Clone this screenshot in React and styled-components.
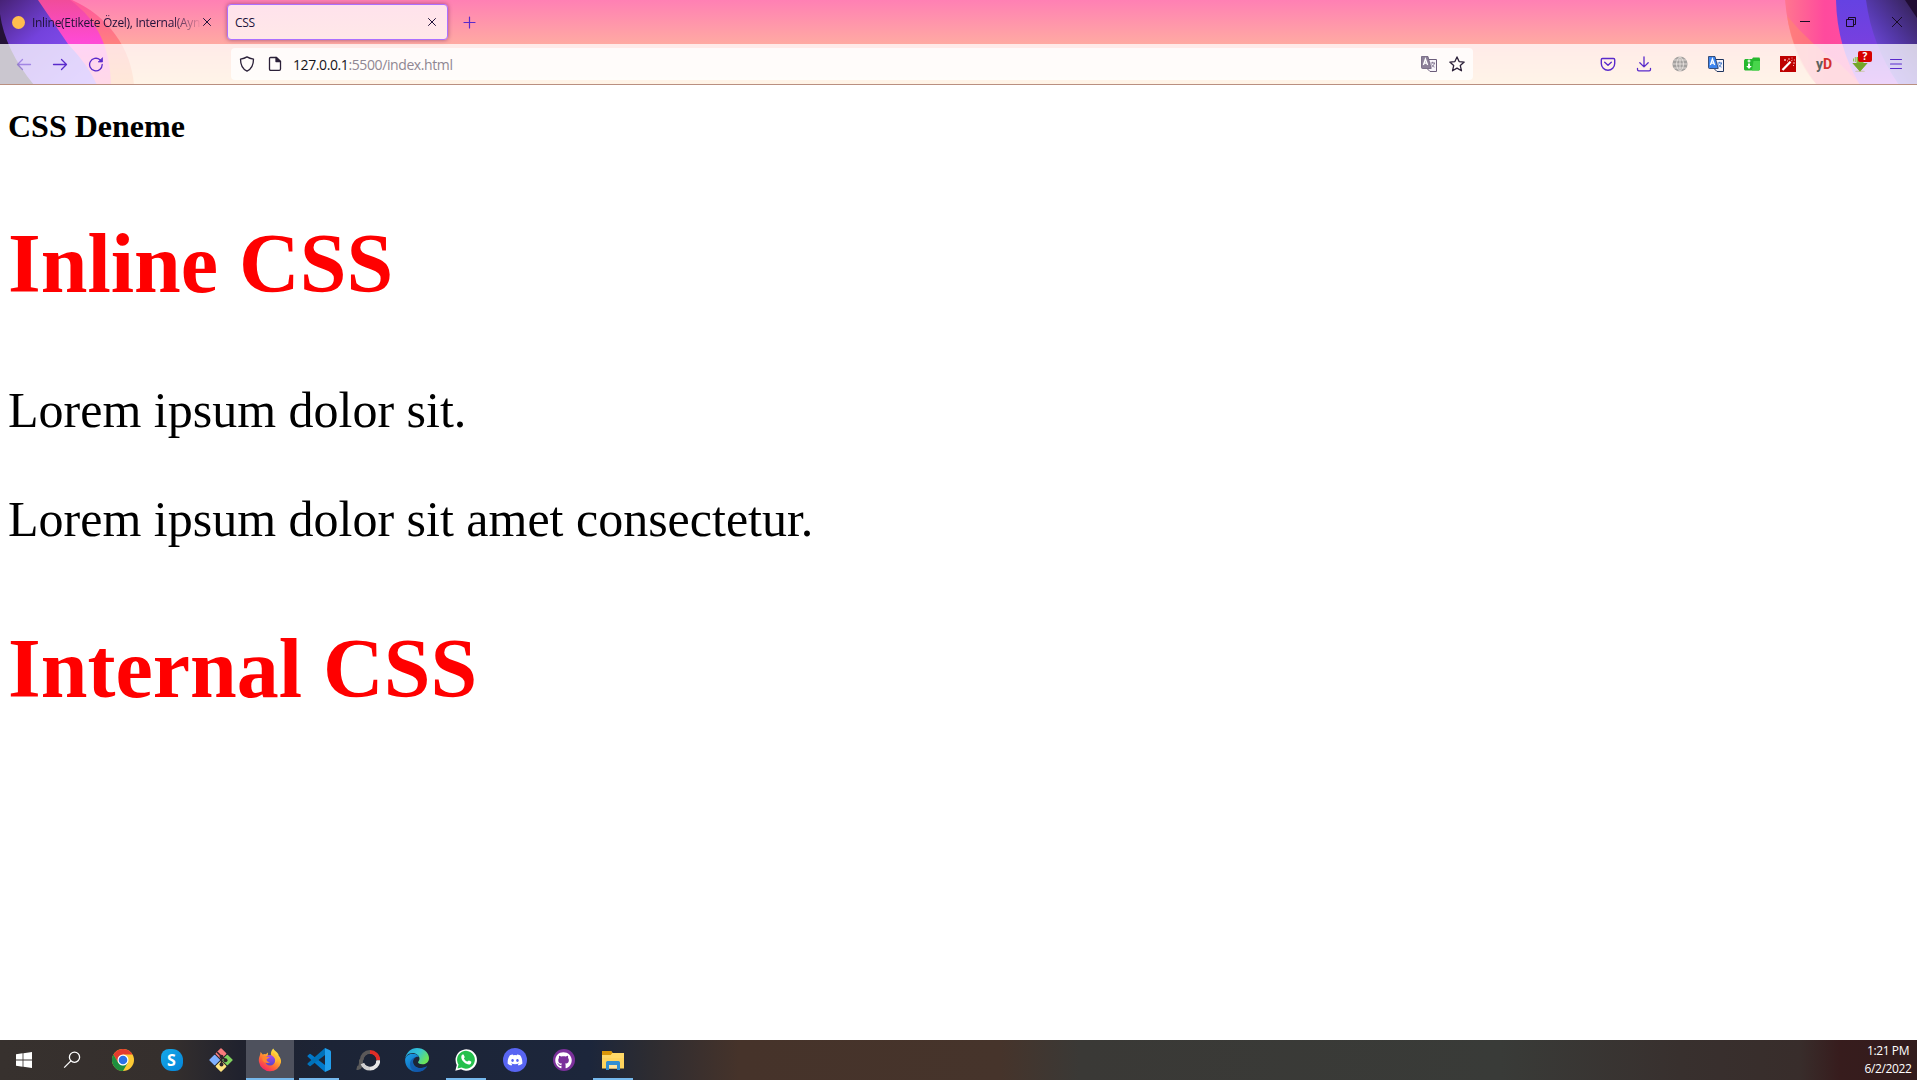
import React from "react";
import styled, { createGlobalStyle } from "styled-components";
import { FaGithub, FaDiscord } from "react-icons/fa";

const GlobalStyle = createGlobalStyle`
  html, body { margin: 0; padding: 0; background: #fff; overflow: hidden; }
  * { box-sizing: border-box; }
  svg { display: block; flex: none; }
`;

const Screen = styled.div`
  display: flex;
  flex-direction: column;
  width: 1917px;
  height: 1080px;
  overflow: hidden;
  font-family: "Open Sans", "Noto Sans", sans-serif;
`;

const Chrome = styled.header`
  position: relative;
  isolation: isolate;
  height: 85px;
  flex: none;
  overflow: hidden;
`;

const ThemeArt = styled.svg`
  position: absolute;
  inset: 0;
  z-index: -1;
`;

const TabStrip = styled.div`
  display: flex;
  align-items: flex-start;
  height: 44px;
  padding-top: 4px;
`;

const Tab = styled.div`
  display: flex;
  align-items: center;
  width: ${(p) => p.$width}px;
  height: 36px;
  padding: 0 10px 0 ${(p) => p.$indent}px;
  margin-left: ${(p) => p.$gap || 0}px;
  border-radius: 4px;
  font-size: 12px;
  color: #20123a;
  ${(p) =>
    p.$active &&
    `background: linear-gradient(#ffe2ec, #ffe8e8);
     border: 1px solid #ac70ff;
     box-shadow: 0 0 4px rgba(90, 20, 80, 0.55);`}
`;

const TabDot = styled.span`
  width: 13px;
  height: 13px;
  margin-right: 7px;
  border-radius: 50%;
  background: #ffbd4f;
  flex: none;
`;

const TabTitle = styled.span`
  flex: 1;
  min-width: 0;
  overflow: hidden;
  white-space: nowrap;
  line-height: 18px;
  padding-top: 2px;
  letter-spacing: ${(p) => p.$tracking || 0}px;
  ${(p) => p.$fade && `mask-image: linear-gradient(to right, #000 82%, transparent 100%);`}
`;

const NewTab = styled.div`
  display: flex;
  align-items: center;
  justify-content: center;
  width: 36px;
  height: 37px;
  margin-left: 3px;
`;

const WindowControls = styled.div`
  display: flex;
  margin-left: auto;
  margin-right: -3px;
`;

const WindowButton = styled.div`
  display: flex;
  align-items: center;
  justify-content: center;
  width: 46px;
  height: 36px;
`;

const Toolbar = styled.div`
  display: flex;
  align-items: center;
  height: 41px;
  padding: 0 3px 0 6px;
  background: rgba(255, 255, 255, 0.76);
  border-bottom: 1px solid #b98f80;
`;

const ToolButton = styled.div`
  display: flex;
  align-items: center;
  justify-content: center;
  width: 36px;
  height: 32px;
  opacity: ${(p) => (p.$disabled ? 0.45 : 1)};
`;

const AddressBar = styled.div`
  display: flex;
  align-items: center;
  width: 1242px;
  height: 32px;
  margin: 0 117px;
  padding: 0 8px;
  border-radius: 4px;
  background: rgba(255, 255, 255, 0.78);
`;

const AddressIcon = styled.div`
  width: 16px;
  height: 16px;
  margin-right: ${(p) => p.$after}px;
`;

const Address = styled.span`
  flex: 1;
  padding-top: 2px;
  font-size: 14px;
  line-height: 20px;
  letter-spacing: -0.4px;
  color: #15141a;
`;

const AddressRest = styled.span`
  color: #8f8793;
`;

const ExtensionName = styled.span`
  font: bold 14px "Roboto", sans-serif;
  color: #5c625e;
`;

const ExtensionAccent = styled.span`
  color: #d32f2f;
`;

const BadgedIcon = styled.div`
  position: relative;
  width: 16px;
  height: 16px;
`;

const Badge = styled.span`
  position: absolute;
  left: 6px;
  top: -5px;
  width: 14px;
  height: 11px;
  border-radius: 2px;
  background: #d70000;
  color: #fff;
  font: bold 10px/11px "Open Sans", sans-serif;
  text-align: center;
`;

const Page = styled.main`
  flex: 1;
  padding: 23px 8px 0;
  background: #fff;
  color: #000;
  font-family: "Liberation Serif", "Times New Roman", serif;
`;

const PageTitle = styled.h1`
  margin: 0;
  font-size: 32px;
  line-height: 36px;
`;

const SectionTitle = styled.h2`
  margin: ${(p) => p.$space}px 0 0;
  font-size: 84px;
  line-height: 96px;
  color: red;
`;

const Paragraph = styled.p`
  margin: ${(p) => p.$space}px 0 0;
  font-size: 50px;
  line-height: 58px;
`;

const Taskbar = styled.footer`
  display: flex;
  flex: none;
  height: 40px;
  background: linear-gradient(
    to right,
    #37312e 0,
    #352f2d 170px,
    #20222e 240px,
    #1c2436 330px,
    #1c263b 590px,
    #2d2c31 650px,
    #46332a 740px,
    #46342b 1000px,
    #3a3936 1080px,
    #393b38 1500px,
    #38302e 1680px,
    #382d2b 1800px,
    #371c1d 1840px,
    #321c1c 1917px
  );
`;

const TaskCell = styled.div`
  position: relative;
  display: flex;
  align-items: center;
  justify-content: center;
  width: ${(p) => p.$width || 49}px;
  height: 40px;
  margin-right: ${(p) => p.$after || 0}px;
  background: ${(p) => (p.$active ? "linear-gradient(to right, transparent 1px, #4e515d 1px)" : "none")};
`;

const RunningMark = styled.span`
  position: absolute;
  bottom: 0;
  left: ${(p) => (p.$wide ? 1 : 5)}px;
  right: ${(p) => (p.$wide ? 0 : 4)}px;
  height: 2px;
  background: #76b9ed;
`;

const Disc = styled.span`
  display: flex;
  align-items: center;
  justify-content: center;
  width: ${(p) => p.$size}px;
  height: ${(p) => p.$size}px;
  border-radius: 50%;
  background: ${(p) => p.$fill};
  color: #fff;
`;

const Clock = styled.div`
  width: 58px;
  margin-left: auto;
  padding-top: 2px;
  color: #fff;
  font-size: 12px;
  line-height: 18px;
  text-align: center;
  letter-spacing: -0.4px;
`;

const Stroke = ({ size = 16, color = "#592acb", width = 1.3, children }) => (
  <svg width={size} height={size} viewBox={`0 0 ${size} ${size}`} fill="none" stroke={color} strokeWidth={width} strokeLinecap="round" strokeLinejoin="round">
    {children}
  </svg>
);

const CloseIcon = () => (
  <Stroke size={10} color="#20123a" width={1}><path d="M1.5 1.5l7 7M8.500 1.500l-7 7" /></Stroke>
);

const Background = () => (
  <ThemeArt width="1917" height="85" viewBox="0 0 1917 85">
    <defs>
      <linearGradient id="sky" x1="0" y1="0" x2="0" y2="1">
        <stop offset="0" stopColor="#ff80b4" /><stop offset=".52" stopColor="#ffaaa2" /><stop offset="1" stopColor="#ffd29c" />
      </linearGradient>
      <linearGradient id="violet" x1="0" y1="0" x2="1" y2="1">
        <stop offset="0" stopColor="#472276" /><stop offset=".4" stopColor="#7442dc" /><stop offset="1" stopColor="#9059ff" />
      </linearGradient>
      <linearGradient id="magenta" x1="0" y1="0" x2="0" y2="1">
        <stop offset="0" stopColor="#f14c9a" /><stop offset=".5" stopColor="#ff4ad6" /><stop offset="1" stopColor="#ff62a0" />
      </linearGradient>
      <linearGradient id="coral" x1="0" y1="0" x2="0" y2="1">
        <stop offset="0" stopColor="#ff559e" /><stop offset=".5" stopColor="#ff7f80" /><stop offset="1" stopColor="#ffa15e" />
      </linearGradient>
      <linearGradient id="coralR" x1="0" y1="0" x2="1" y2="0">
        <stop offset="0" stopColor="#ff768f" /><stop offset=".3" stopColor="#ff4a9d" /><stop offset="1" stopColor="#ff4daa" />
      </linearGradient>
      <linearGradient id="violetR" x1="0" y1="0" x2="0" y2="1">
        <stop offset="0" stopColor="#6542e2" /><stop offset=".5" stopColor="#7740df" /><stop offset="1" stopColor="#b64cec" />
      </linearGradient>
      <linearGradient id="duskR" x1="1" y1="0" x2=".2" y2="1">
        <stop offset="0" stopColor="#32204f" /><stop offset=".5" stopColor="#5539ab" /><stop offset="1" stopColor="#8254ff" />
      </linearGradient>
    </defs>
    <rect width="1917" height="85" fill="url(#sky)" />
    <path d="M0 0H72C108 16 131 48 134 85H0Z" fill="url(#coral)" />
    <path d="M0 0H70C98 20 110 48 111 85H0Z" fill="url(#magenta)" />
    <path d="M0 0H38L68 44Q89 66 97 85H0Z" fill="url(#violet)" />
    <path d="M0 14Q5 50 34 85H0Z" fill="#241236" />
    <path d="M1785 0Q1789 50 1817 85H1917V0Z" fill="url(#coralR)" />
    <path d="M1787 16Q1794 61 1817 85H1861L1840 64Q1812 46 1787 16Z" fill="#ff876e" opacity=".55" />
    <path d="M1836 0Q1837 47 1860 85H1917V0Z" fill="url(#violetR)" />
    <path d="M1866 0Q1872 46 1899 85H1917V0Z" fill="url(#duskR)" />
    <path d="M1905 0L1917 18V0Z" fill="#200d33" />
  </ThemeArt>
);

const TranslateIcon = ({ back, front, ink }) => (
  <svg width="16" height="16" viewBox="0 0 16 16">
    <path d="M7.500 3.500h8v12H9L6.500 13" fill="#f7f4fa" stroke={ink} />
    <path d="M9.500 7h4.500M11.700 5.800V7M13.500 7c-.5 2-1.600 3.300-3 4M10.500 8.500c.6 1.200 1.500 2 3 2.600" fill="none" stroke={front} strokeWidth="1" />
    <path d="M.5.5H7l3.200 12H1.500q-1 0-1-1Z" fill={back} stroke={ink} strokeWidth=".8" />
    <path d="M2.400 9l2-6 2.200 6M3 7.200h3" fill="none" stroke="#fff" strokeWidth="1.300" />
  </svg>
);

const GlobeIcon = () => (
  <svg width="16" height="16" viewBox="0 0 16 16" fill="none">
    <circle cx="8" cy="8" r="7.600" fill="#a4a19f" />
    <path d="M8 .5v15M.5 8h15M2 4h12M2 12h12M8 .5C3.400 4.500 3.400 11.500 8 15.500 12.600 11.500 12.600 4.500 8 .5" stroke="#efe9e5" strokeWidth=".8" />
  </svg>
);

const GreenFolder = () => (
  <svg width="16" height="14" viewBox="0 0 16 14">
    <path d="M0 3.500 1 2h7l1-1.500h6.500L16 2v10.500l-1 1H1l-1-1Z" fill="#26b82f" />
    <path d="M9.500 4H16v8.500l-1 1H8Z" fill="#48d64b" />
    <path d="M5 2.500v3M3.500 4h3" stroke="#fff" strokeWidth="1.200" fill="none" />
    <path d="M4 6.500h2V9h1.800L5 12 2.200 9H4Z" fill="#fff" />
  </svg>
);

const WandIcon = () => (
  <svg width="16" height="16" viewBox="0 0 16 16">
    <rect width="16" height="16" fill="#be0000" />
    <path d="M2.500 14 10.500 5.800" stroke="#fff" strokeWidth="2.300" />
    <path d="M11 5.300l1.500-1.500M9 2v2M13 7h2M5 3v2M4 4h2M12 1.500v1M14 4h1M13 9.500h1M7.500 4.500v1" stroke="#ffdede" strokeWidth=".8" />
  </svg>
);

const DownloadHelper = () => (
  <svg width="16" height="16" viewBox="0 0 16 16">
    <ellipse cx="8" cy="15.300" rx="5" ry=".8" fill="#d2c7bb" />
    <path d="M4.500 1h7v6h4L8 15.500.5 7h4Z" fill="#86bd35" />
    <path d="M.5 7h15L8 15.500Z" fill="#74a52c" />
    <path d="M1.500 2.500v3M3.300 1v5" stroke="#8fc24b" />
  </svg>
);

const WindowsLogo = () => (
  <svg width="16" height="16" viewBox="0 0 16 16" fill="#fff">
    <path d="M0 2.200 6.600 1.300v6.300H0ZM7.400 1.200 16 0v7.600H7.400ZM0 8.400h6.600v6.300L0 13.800ZM7.400 8.400H16V16l-8.600-1.200Z" />
  </svg>
);

const SearchIcon = () => (
  <svg width="18" height="18" viewBox="0 0 18 18" fill="none" stroke="#fff" strokeWidth="1.300">
    <circle cx="11.500" cy="6.200" r="5.100" /><path d="M7.900 9.900 1.200 16.600" />
  </svg>
);

const ChromeLogo = () => (
  <svg width="22" height="22" viewBox="0 0 22 22">
    <circle cx="11" cy="11" r="11" fill="#fcc934" />
    <path d="M1.470 5.500A11 11 0 0 1 20.530 5.500H11L6.200 13.700Z" fill="#e33b2e" />
    <path d="M1.470 5.500A11 11 0 0 0 11 22l4.760-8.250L11 16.500 6.240 13.750Z" fill="#1e8e3e" />
    <circle cx="11" cy="11" r="5.500" fill="#fff" /><circle cx="11" cy="11" r="4.300" fill="#2b72e6" />
  </svg>
);

const SkypeMark = styled.span`
  display: flex;
  align-items: center;
  justify-content: center;
  width: 22px;
  height: 22px;
  border-radius: 8px 11px 8px 11px;
  background: linear-gradient(135deg, #16a9e8, #0484d8);
  color: #fff;
  font: bold 16px/22px "Open Sans", sans-serif;
`;

const GitLogo = () => (
  <svg width="24" height="24" viewBox="0 0 24 24">
    <g transform="rotate(45 12 12)">
      <rect x="3.500" y="3.500" width="8" height="8" rx=".8" fill="#fa7c7c" />
      <rect x="12.500" y="3.500" width="8" height="8" rx=".8" fill="#80d35e" />
      <rect x="3.500" y="12.500" width="8" height="8" rx=".8" fill="#7fb0ff" />
      <rect x="12.500" y="12.500" width="8" height="8" rx=".8" fill="#ffe580" />
    </g>
    <path d="M8 4l4.500 4.500V17M12.500 8.500l4 3.500" fill="none" stroke="#30252b" strokeWidth="1.600" />
    <circle cx="12.500" cy="8.800" r="2" fill="#30252b" /><circle cx="16.500" cy="12.200" r="2" fill="#30252b" /><circle cx="12.500" cy="16.500" r="2" fill="#30252b" />
  </svg>
);

const FirefoxLogo = () => (
  <svg width="24" height="24" viewBox="0 0 24 24">
    <defs>
      <linearGradient id="flame" x1=".85" y1="0" x2=".2" y2="1">
        <stop offset="0" stopColor="#fff44f" /><stop offset=".35" stopColor="#ffb72e" /><stop offset=".65" stopColor="#ff6a36" /><stop offset="1" stopColor="#f4196f" />
      </linearGradient>
      <linearGradient id="orb" x1="0" y1="0" x2="0" y2="1"><stop offset="0" stopColor="#a84be8" /><stop offset="1" stopColor="#5945c8" /></linearGradient>
    </defs>
    <path d="M15.200.5c1 2.300 3.800 3.300 5 5.400.2.300.4 1.500.4 1.500C22.500 9.500 23.400 12 23 14.500A11.200 11.200 0 0 1 1 14C.3 9.500 2.300 7.800 2.600 4l2.100 2.500Q6.500 5.700 8 6.300 9 5 10 4.600l-.2 3 3.500.3Q12 3.700 15.200.5Z" fill="url(#flame)" />
    <circle cx="12" cy="12.300" r="5.200" fill="url(#orb)" />
    <path d="M4.500 8.600c3-1.200 4 .5 7 .4.300 1-2.900 1.600-3 3 .8 1.700 2.300 2.100 3.600 2.200-2.800 1.800-6.800.3-7.600-2Z" fill="#ff852f" />
    <path d="M14 7.500c3 1.500 4 4.500 3 7.500 2-1.300 2.500-4 1.500-6L15.500 5Z" fill="#ffba35" />
  </svg>
);

const CodeLogo = () => (
  <svg width="24" height="24" viewBox="0 0 24 24">
    <path d="M.7 7.600 2.500 6Q3 5.700 3.600 6.100L18 17v7L.7 8.800Q.3 8.200.7 7.600Z" fill="#0179cb" />
    <path d="M.7 16.400 2.500 18q.5.300 1.100-.1L18 7V0L.7 15.200q-.4.600 0 1.200Z" fill="#0072ba" />
    <path d="M18 0v24l5-2.300q1-.5 1-1.500V3.800q0-1-1-1.500Z" fill="#229eeb" />
  </svg>
);

const RingLogo = () => (
  <svg width="24" height="24" viewBox="0 0 24 24" fill="none">
    <path d="M5 11.500Q5.500 21 .8 19.700" stroke="#5b5b5b" strokeWidth="4" />
    <path d="M14 4a8.300 8.300 0 0 0-8.300 8.300" stroke="#5a5858" strokeWidth="4" />
    <path d="M14 4a8.300 8.300 0 0 1 8.300 8.300" stroke="#e12d27" strokeWidth="4" />
    <path d="M22.300 12.300a8.300 8.300 0 0 1-8.300 8.300" stroke="#e6e6e6" strokeWidth="4" />
    <path d="M6.500 15.500A8.300 8.300 0 0 0 14 20.600" stroke="#d0d0d0" strokeWidth="4" />
    <circle cx="14" cy="12.300" r="6.200" fill="#1c2436" />
  </svg>
);

const EdgeLogo = () => (
  <svg width="24" height="24" viewBox="0 0 24 24">
    <defs>
      <linearGradient id="wave" x1="0" y1="0" x2="1" y2=".5"><stop offset="0" stopColor="#23a5df" /><stop offset=".55" stopColor="#35c5d5" /><stop offset="1" stopColor="#6be35a" /></linearGradient>
      <linearGradient id="deep" x1="0" y1="0" x2="1" y2="1"><stop offset="0" stopColor="#1aa1e8" /><stop offset="1" stopColor="#0c4da4" /></linearGradient>
    </defs>
    <path d="M.2 10.800C1 4.700 6 0 12 0c6.800 0 12 4.600 12 10 0 4-3 6.300-6.500 6.300-3.400 0-4.500-1.300-4.500-2 0-.8 1.500-1.300 1.500-3.500C14.500 7.500 11 5 7.600 5 3.500 5 .7 8 .2 10.800Z" fill="url(#wave)" />
    <path d="M.2 10.800C1.300 7.500 4.500 5.800 8 5.800c3 0 5.500 1.400 6 3.200-2-1-6 .4-6 4.500 0 4.400 4 7 8.300 6.500 2.500-.2 4.400-1 5.700-1.700C20.300 21.700 16.500 24 12 24 5 24-.6 18.300.2 10.800Z" fill="url(#deep)" />
    <path d="M10.800 9.300C9 10.500 8 12 8 14.200c0 4.100 4 6.400 8.300 5.800 2.500-.2 4.400-1 5.700-1.700-1.800 3.500-5.500 5.700-10 5.700-5-.9-7-4.500-7-8 0-3.400 2.500-6.200 5.800-6.700Z" fill="#1355a8" opacity=".75" />
  </svg>
);

const ExplorerLogo = () => (
  <svg width="22" height="19" viewBox="0 0 22 19">
    <path d="M0 2Q0 0 1.500 0H9l1.500 2H22v15.500H0Z" fill="#ffd45d" />
    <path d="M0 0h9l1.500 1.500L9 4H0Z" fill="#db9708" />
    <path d="M0 4h9l1.500-2H22v5H0Z" fill="#ffd968" />
    <path d="M4 19v-7.500Q4 10 5.500 10h11q1.500 0 1.500 1.500V19h-3v-5H7v5Z" fill="#318ed2" />
    <path d="M7 14h8v3.500H7Z" fill="#ffe29a" />
  </svg>
);

const WhatsAppLogo = () => (
  <svg width="22" height="22" viewBox="0 0 22 22">
    <path d="M.3 21.700 1.800 16A10.700 10.700 0 1 1 6 20.300Z" fill="#fff" />
    <path d="M2.500 19.600l1-4A8.900 8.900 0 1 1 6.600 18.500Z" fill="#25c04c" />
    <path d="M7.200 5.800c.5-.5 1.300-.5 1.600.1l.9 2c.2.500-.8 1.300-.8 1.500.8 1.500 2 2.600 3.600 3.200.3 0 1-1.200 1.500-1l2.100 1c.6.400.1 1.800-.5 2.300-2.800 2-8.800-2.300-9.300-6.200-.1-1 .2-2.200.9-2.900Z" fill="#fff" />
  </svg>
);

export default function App() {
  return (
    <Screen>
      <GlobalStyle />
      <Chrome>
        <Background />
        <TabStrip>
          <Tab $width={222} $indent={12}>
            <TabDot />
            <TabTitle $fade $tracking={-0.3}>Inline(Etikete Özel), Internal(Aynı</TabTitle>
            <CloseIcon />
          </Tab>
          <Tab $active $width={221} $indent={7} $gap={5}>
            <TabTitle $tracking={-0.3}>CSS</TabTitle>
            <CloseIcon />
          </Tab>
          <NewTab>
            <Stroke size={13} width={1.2}><path d="M6.500 1v11M1 6.500h11" /></Stroke>
          </NewTab>
          <WindowControls>
            <WindowButton><svg width="10" height="10"><path d="M0 4.500h10" stroke="#180b25" /></svg></WindowButton>
            <WindowButton><svg width="10" height="10" fill="none" stroke="#180b25"><path d="M.5 2.500h7v7h-7ZM2.500 2.500v-2h7v7h-2" /></svg></WindowButton>
            <WindowButton><svg width="10" height="10" stroke="#180b25"><path d="M0 0l10 10M10 0L0 10" /></svg></WindowButton>
          </WindowControls>
        </TabStrip>
        <Toolbar>
          <ToolButton $disabled><Stroke><path d="M14.500 8.500h-13M6.500 3.500l-5 5 5 5" /></Stroke></ToolButton>
          <ToolButton><Stroke><path d="M1.500 8.500h13M9.500 3.500l5 5-5 5" /></Stroke></ToolButton>
          <ToolButton><Stroke><path d="M14.200 8.500A6.300 6.300 0 1 1 12 3.800l1.500 1.200" /><path d="M14.500 2v4h-4Z" fill="#592acb" strokeWidth=".7" /></Stroke></ToolButton>
          <AddressBar>
            <AddressIcon $after={12}><Stroke color="#2b2038" width={1.3}><path d="M8 .9c2.200 1.400 4.300 1.900 6.500 2.200C14.500 8.500 13 13 8 15.200 3 13 1.500 8.500 1.500 3.100 3.700 2.800 5.800 2.300 8 .9Z" /></Stroke></AddressIcon>
            <AddressIcon $after={10}><Stroke color="#2b2038" width={1.3}><path d="M3.500 1.500h6l4 4V13q0 1.300-1.300 1.300H3.700Q2.500 14.300 2.500 13V2.500q0-1 1-1Z" /><path d="M9 1.500V5.500h4.500Z" fill="#2b2038" /></Stroke></AddressIcon>
            <Address>127.0.0.1<AddressRest>:5500/index.html</AddressRest></Address>
            <AddressIcon $after={12}><TranslateIcon back="#8d8199" front="#81748f" ink="#6b5d7a" /></AddressIcon>
            <AddressIcon $after={0}><Stroke color="#2b2038" width={1.3}><path d="M8 .9l2.100 4.700 5.100.5-3.900 3.500 1.200 5.200L8 12.100l-4.500 2.700 1.200-5.200L.8 6.100l5.100-.5Z" /></Stroke></AddressIcon>
          </AddressBar>
          <ToolButton><Stroke width={1.4}><path d="M2.500 2.500h11q1.200 0 1.200 1.200V7.500a6.700 6.700 0 0 1-13.400 0V3.700q0-1.200 1.200-1.200ZM4.700 6.300 8 9.300l3.300-3" /></Stroke></ToolButton>
          <ToolButton><Stroke><path d="M8 .8v10M3.800 6.800 8 10.900l4.200-4.100M1.500 12.500v1q0 1.300 1.300 1.300h10.400q1.300 0 1.300-1.300v-1" /></Stroke></ToolButton>
          <ToolButton><GlobeIcon /></ToolButton>
          <ToolButton><TranslateIcon back="#3c84ee" front="#3c74c8" ink="#1e345e" /></ToolButton>
          <ToolButton><GreenFolder /></ToolButton>
          <ToolButton><WandIcon /></ToolButton>
          <ToolButton><ExtensionName>y<ExtensionAccent>D</ExtensionAccent></ExtensionName></ToolButton>
          <ToolButton><BadgedIcon><DownloadHelper /><Badge>?</Badge></BadgedIcon></ToolButton>
          <ToolButton><Stroke width={1.1}><path d="M2.500 3.500h11M2.500 8h11M2.500 12.500h11" /></Stroke></ToolButton>
        </Toolbar>
      </Chrome>

      <Page>
        <PageTitle>CSS Deneme</PageTitle>
        <SectionTitle $space={72}>Inline CSS</SectionTitle>
        <Paragraph $space={69}>Lorem ipsum dolor sit.</Paragraph>
        <Paragraph $space={51}>Lorem ipsum dolor sit amet consectetur.</Paragraph>
        <SectionTitle $space={73}>Internal CSS</SectionTitle>
      </Page>

      <Taskbar>
        <TaskCell $width={48}><WindowsLogo /></TaskCell>
        <TaskCell $width={48} $after={2}><SearchIcon /></TaskCell>
        <TaskCell><ChromeLogo /></TaskCell>
        <TaskCell><SkypeMark>S</SkypeMark></TaskCell>
        <TaskCell><GitLogo /></TaskCell>
        <TaskCell $active><FirefoxLogo /><RunningMark $wide /></TaskCell>
        <TaskCell><CodeLogo /><RunningMark /></TaskCell>
        <TaskCell><RingLogo /></TaskCell>
        <TaskCell><EdgeLogo /></TaskCell>
        <TaskCell><WhatsAppLogo /><RunningMark /></TaskCell>
        <TaskCell><Disc $size={24} $fill="#5865f2"><FaDiscord size={16} /></Disc></TaskCell>
        <TaskCell><Disc $size={22} $fill="#7b309b"><FaGithub size={17} /></Disc></TaskCell>
        <TaskCell><ExplorerLogo /><RunningMark /></TaskCell>
        <Clock>
          <div>1:21 PM</div>
          <div>6/2/2022</div>
        </Clock>
      </Taskbar>
    </Screen>
  );
}
